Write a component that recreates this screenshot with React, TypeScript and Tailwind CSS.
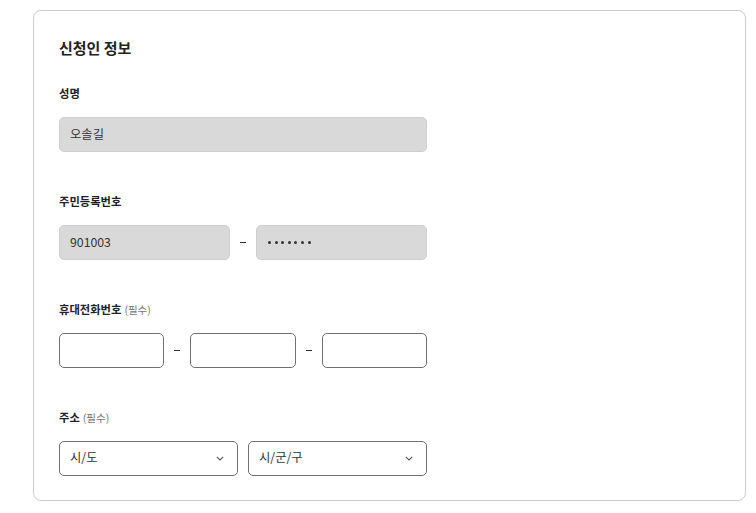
import React from 'react';

function Label({ text, required }: { text: string; required?: boolean }) {
  return (
    <div className="h-[18px] leading-[18px] text-[11.3px] font-bold text-[#222]">
      {text}
      {required && <span className="ml-[3px] text-[10.5px] font-normal text-[#777]">(필수)</span>}
    </div>
  );
}

function ReadOnlyBox({ children }: { children?: React.ReactNode }) {
  return (
    <div className="flex h-[35px] flex-1 items-center rounded-[5px] border border-[#cfcfcf] bg-[#d9d9d9] px-[10px] text-[12.3px] text-[#333]">
      {children}
    </div>
  );
}

function EmptyBox() {
  return <div className="h-[35px] flex-1 rounded-[5px] border border-[#707070] bg-white" />;
}

function Dash() {
  return (
    <div className="flex w-[26px] shrink-0 items-center justify-center">
      <div className="h-px w-[6px] bg-[#333]" />
    </div>
  );
}

function Select({ placeholder }: { placeholder: string }) {
  return (
    <div className="flex h-[35px] flex-1 items-center justify-between rounded-[5px] border border-[#707070] bg-white pl-[10px] pr-[13px] text-[12.3px] text-[#333]">
      <span className="-mt-[3px]">{placeholder}</span>
      <svg width="8" height="5" viewBox="0 0 8 5" fill="none">
        <path d="M0.8 0.8 L4 4 L7.2 0.8" stroke="#555" strokeWidth="1.1" />
      </svg>
    </div>
  );
}

export default function App() {
  return (
    <div
      className="min-h-[513px] bg-white pl-[33px] pr-[10px] pt-[10px]"
      style={{ fontFamily: '"Noto Sans CJK KR", "Noto Sans", sans-serif' }}
    >
      <div className="w-[713px] rounded-[8px] border border-[#cccccc] px-[25px] pb-[24px] pt-[25px]">
        <h1 className="h-[24px] text-[15px] font-bold leading-[24px] text-[#222]">신청인 정보</h1>

        <div className="mt-[24px] w-[368px]">
          <Label text="성명" />
          <div className="mt-[15px] flex">
            <ReadOnlyBox>오솔길</ReadOnlyBox>
          </div>
        </div>

        <div className="mt-[40px] w-[368px]">
          <Label text="주민등록번호" />
          <div className="mt-[15px] flex">
            <ReadOnlyBox>901003</ReadOnlyBox>
            <Dash />
            <ReadOnlyBox>
              <div className="flex gap-[3.6px] pl-[1px]">
                {Array.from({ length: 7 }).map((_, i) => (
                  <span key={i} className="h-[3px] w-[3px] rounded-full bg-[#333]" />
                ))}
              </div>
            </ReadOnlyBox>
          </div>
        </div>

        <div className="mt-[40px] w-[368px]">
          <Label text="휴대전화번호" required />
          <div className="mt-[15px] flex">
            <EmptyBox />
            <Dash />
            <EmptyBox />
            <Dash />
            <EmptyBox />
          </div>
        </div>

        <div className="mt-[40px] w-[368px]">
          <Label text="주소" required />
          <div className="mt-[15px] flex gap-[10px]">
            <Select placeholder="시/도" />
            <Select placeholder="시/군/구" />
          </div>
        </div>
      </div>
    </div>
  );
}
